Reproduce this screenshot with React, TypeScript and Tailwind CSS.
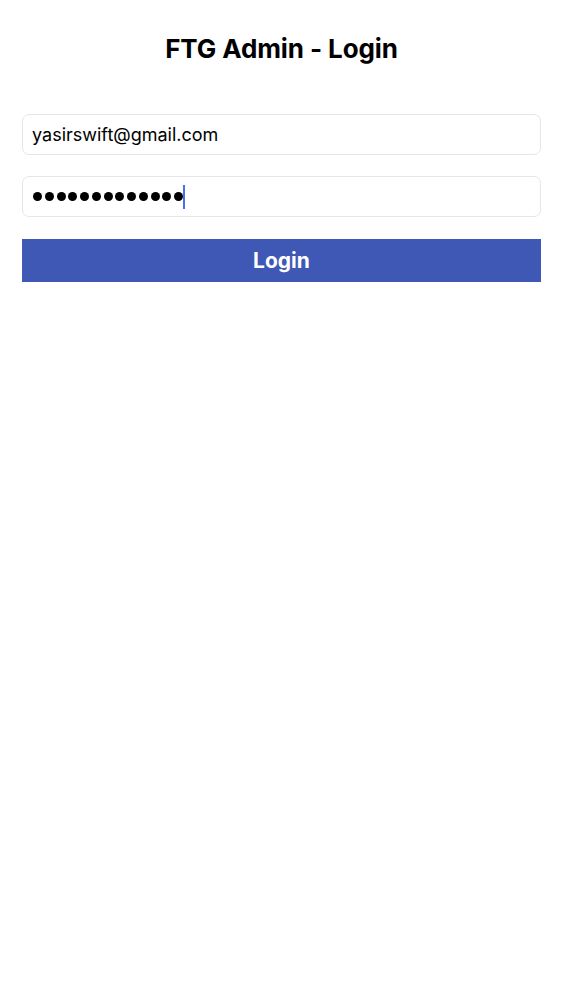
export default function App() {
  return (
    <main className="min-h-screen bg-white font-['Inter',sans-serif] text-black">
      <div className="px-[22px] pt-[33px]">
        <h1 className="text-center text-[26px] font-bold leading-[32px] tracking-[-0.1px]">FTG Admin - Login</h1>

        <form className="mt-[49px] flex flex-col">
          <div className="flex h-[41px] items-center rounded-[7px] border border-[#e6e6e6] px-[9px] text-[18px]">
            yasirswift@gmail.com
          </div>

          <div className="mt-[21px] flex h-[41px] items-center rounded-[7px] border border-[#e6e6e6] px-[10px]">
            <span className="flex gap-[2.75px]">
              {Array.from({ length: 13 }).map((_, i) => (
                <span key={i} className="block h-[9px] w-[9px] rounded-full bg-black" />
              ))}
            </span>
            <span className="block h-[24px] w-[2px] bg-[#4a6cf0]" />
          </div>

          <button
            type="button"
            className="mt-[22px] h-[43px] w-full bg-[#3f58b6] text-[21px] font-bold text-white"
          >
            Login
          </button>
        </form>
      </div>
    </main>
  )
}
